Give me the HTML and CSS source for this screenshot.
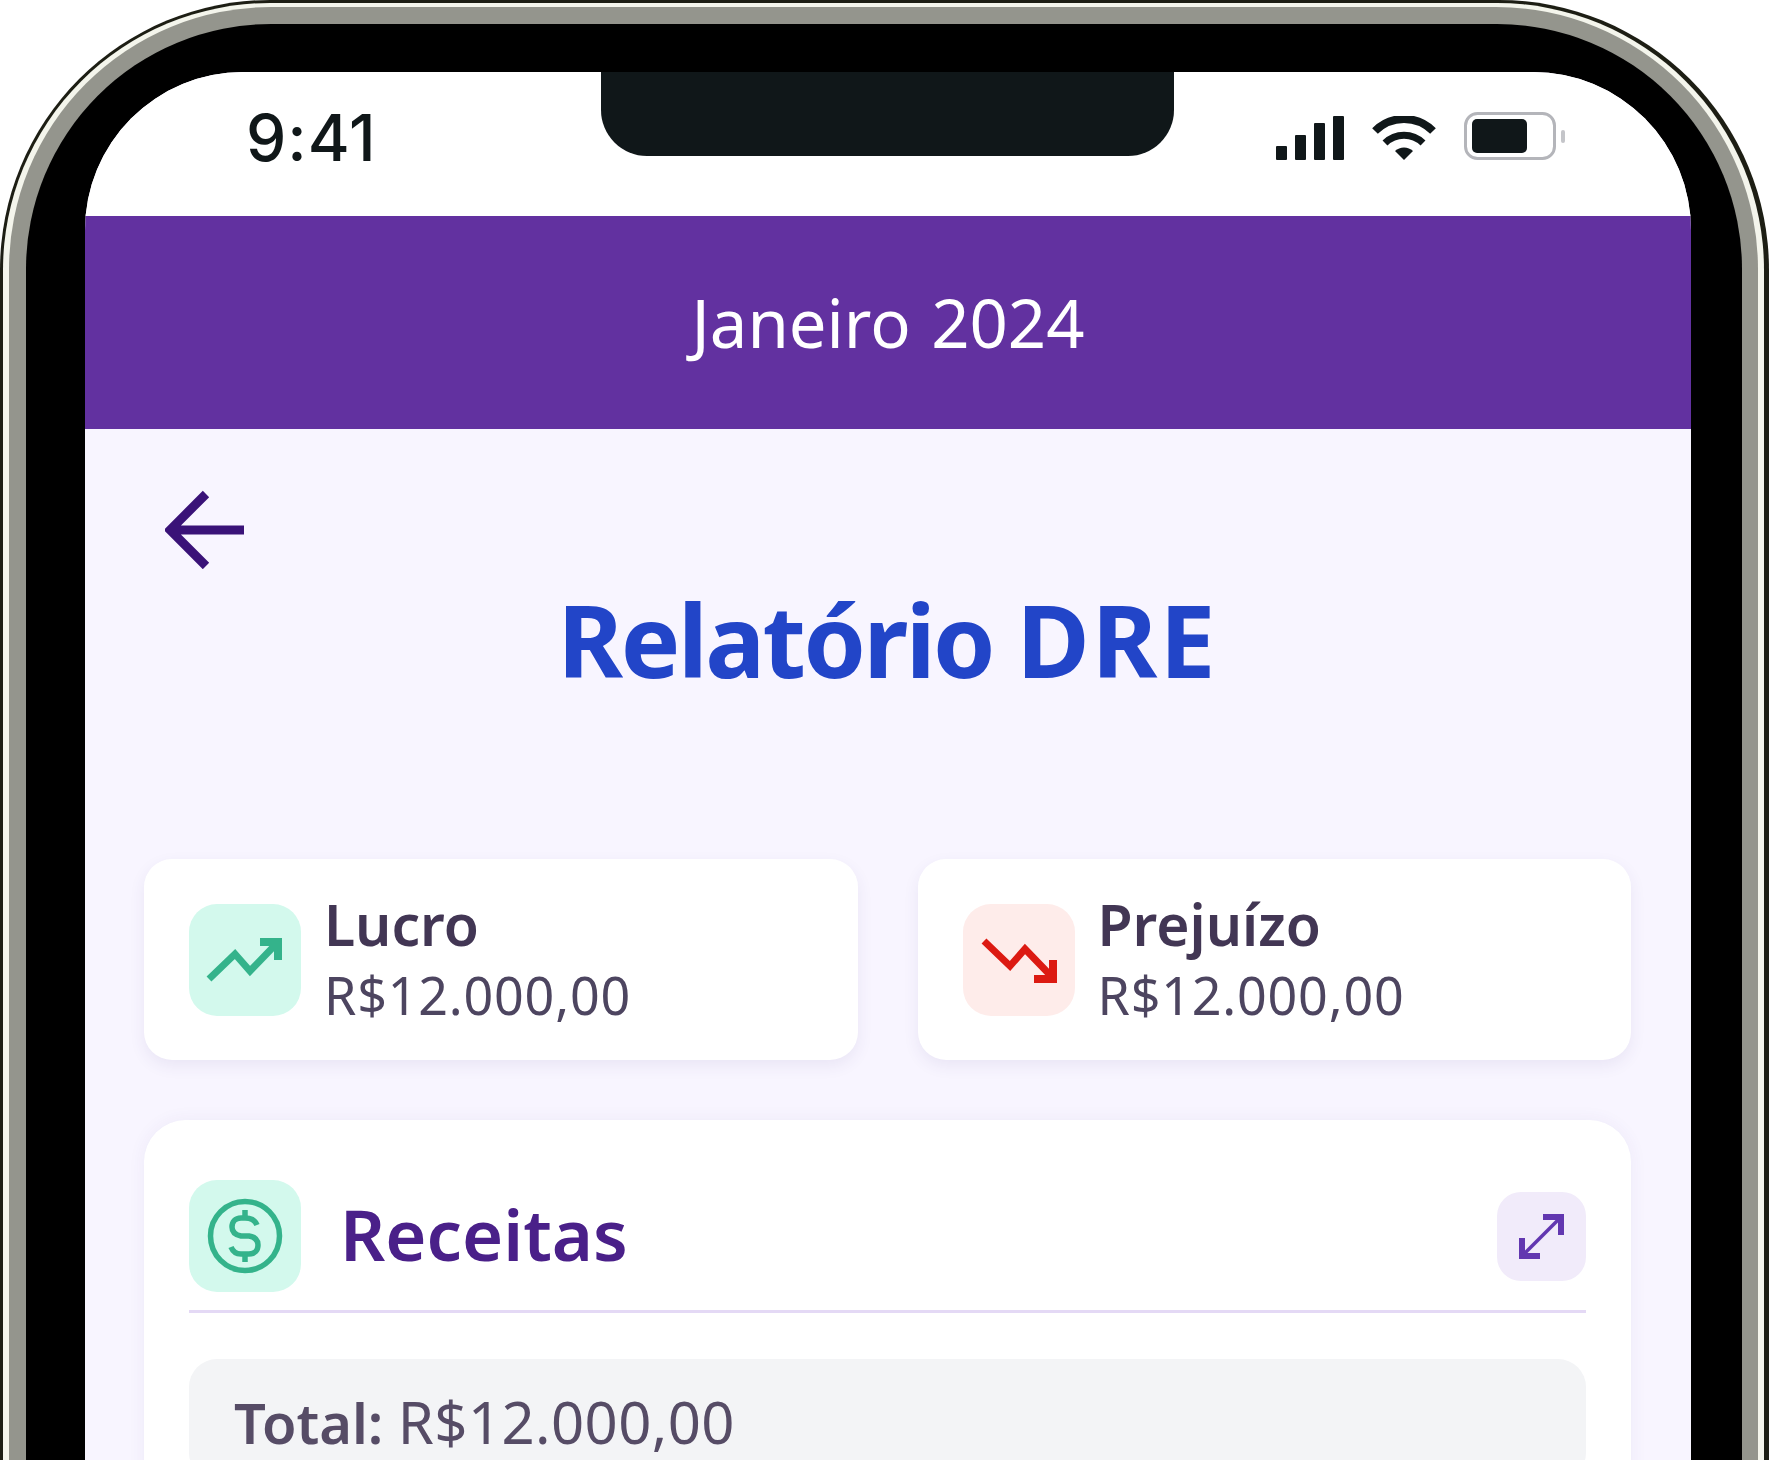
FILE: index.html
```html
<!DOCTYPE html>
<html lang="pt-BR">
    <head>
        <meta charset="UTF-8" />
        <meta name="viewport" content="width=device-width, initial-scale=1.0"/>
        <title>Relatório DRE</title>
        <link rel="stylesheet" href="styles.css">
    </head>
    <body>
        <div class="phone">
            <div class="rim">
                <div class="metal">
                    <div class="bezel">
                        <div class="screen">
                            <div class="notch"></div>

                            <div class="status">
                                <span class="time">9:41</span>
                                <div class="status-icons">
                                    <svg class="signal" width="68" height="44" viewBox="0 0 68 44">
                                        <rect x="0" y="30" width="11" height="14" rx="1"/>
                                        <rect x="19" y="19" width="11" height="25" rx="1"/>
                                        <rect x="38" y="7" width="11" height="37" rx="1"/>
                                        <rect x="57" y="0" width="11" height="44" rx="1"/>
                                    </svg>
                                    <svg class="wifi" width="64" height="44" viewBox="0 0 64 44">
                                        <path d="M3 15A41 41 0 0 1 61 15" fill="none" stroke="#101719" stroke-width="8"/>
                                        <path d="M13 27A27 27 0 0 1 51 27" fill="none" stroke="#101719" stroke-width="7"/>
                                        <path d="M32 44L23 35A13 13 0 0 1 41 35Z" fill="#101719"/>
                                    </svg>
                                    <svg class="battery" width="103" height="48" viewBox="0 0 103 48">
                                        <rect x="1.5" y="1.5" width="89" height="45" rx="12" fill="none" stroke="#b4b5ba" stroke-width="3"/>
                                        <rect x="8" y="7" width="55" height="34" rx="5" fill="#101719"/>
                                        <rect x="97" y="18" width="4" height="13" rx="2" fill="#c4c5c9"/>
                                    </svg>
                                </div>
                            </div>

                            <div class="topbar"><span>Janeiro 2024</span></div>

                            <div class="content">
                                <svg class="back" width="80" height="80" viewBox="0 0 80 80">
                                    <path d="M41 5L5 41L41 77M5 41H79" fill="none" stroke="#3a1278" stroke-width="9"/>
                                </svg>

                                <h1 class="title">Relatório <span class="title-caps">DRE</span></h1>

                                <div class="summary">
                                    <div class="summary-card">
                                        <div class="icon-box green">
                                            <svg width="112" height="112" viewBox="0 0 112 112">
                                                <path d="M20 75L46 50L61 67L90 37" fill="none" stroke="#34b38b" stroke-width="7"/>
                                                <path d="M71 38H89V56" fill="none" stroke="#34b38b" stroke-width="8"/>
                                            </svg>
                                        </div>
                                        <div class="summary-text">
                                            <span class="summary-label">Lucro</span>
                                            <span class="summary-value">R$12.000,00</span>
                                        </div>
                                    </div>
                                    <div class="summary-card">
                                        <div class="icon-box red">
                                            <svg width="112" height="112" viewBox="0 0 112 112">
                                                <path d="M21 37L47 62L62 45L90 74" fill="none" stroke="#dc1a12" stroke-width="7"/>
                                                <path d="M71 75H90V56" fill="none" stroke="#dc1a12" stroke-width="8"/>
                                            </svg>
                                        </div>
                                        <div class="summary-text">
                                            <span class="summary-label">Prejuízo</span>
                                            <span class="summary-value">R$12.000,00</span>
                                        </div>
                                    </div>
                                </div>

                                <div class="section">
                                    <div class="section-head">
                                        <div class="icon-box green">
                                            <svg width="112" height="112" viewBox="0 0 112 112" fill="none" stroke="#34b38b" stroke-width="5.5">
                                                <circle cx="56" cy="56" r="34.5"/>
                                                <path d="M68 45C66 40 61 38 56 38H52C46 38 43 42 43 47C43 52 47 55 52 56H60C66 57 69 60 69 65C69 70 66 74 60 74H52C47 74 44 72 42 67"/>
                                                <path d="M56 30V38M56 74V82"/>
                                            </svg>
                                        </div>
                                        <h2 class="section-title">Receitas</h2>
                                        <button class="expand">
                                            <svg width="89" height="89" viewBox="0 0 89 89" fill="none" stroke="#6237b0">
                                                <path d="M24 65L65 24" stroke-width="3.5"/>
                                                <path d="M46 25H64V43M43 64H25V46" stroke-width="6"/>
                                            </svg>
                                        </button>
                                    </div>
                                    <div class="total"><b>Total:</b> <span class="total-value">R$12.000,00</span></div>
                                </div>
                            </div>
                        </div>
                    </div>
                </div>
            </div>
        </div>
    </body>
</html>
```

FILE: styles.css
```css
* {
    margin: 0;
    padding: 0;
    box-sizing: border-box;
}

body {
    height: 100vh;
    overflow: hidden;
    background-color: #fff;
    font-family: 'Noto Sans', sans-serif;
}

.phone {
    height: 1700px;
    padding: 3px 5px 0 3px;
    background-color: #1d1e14;
    border-radius: 270px 270px 0 0;
}

.rim {
    height: 100%;
    padding: 4px 6px 0 6px;
    background-color: #f4f5ec;
    border-radius: 267px 267px 0 0;
}

.metal {
    height: 100%;
    padding: 17px 16px 0 17px;
    background-color: #94958d;
    border-radius: 262px 262px 0 0;
}

.bezel {
    height: 100%;
    padding: 48px 51px 0 59px;
    background-color: #000;
    border-radius: 245px 245px 0 0;
}

.screen {
    position: relative;
    height: 100%;
    overflow: hidden;
    background-color: #f8f5ff;
    border-radius: 158px 158px 0 0;
}

.notch {
    position: absolute;
    top: 0;
    left: 516px;
    width: 573px;
    height: 84px;
    background-color: #101719;
    border-radius: 0 0 46px 46px;
}

.status {
    height: 144px;
    padding: 40px 126px 0 161px;
    display: flex;
    justify-content: space-between;
    align-items: flex-start;
    background-color: #fff;
}

.time {
    margin-top: -4px;
    font-family: 'Inter', sans-serif;
    font-size: 64px;
    font-weight: 500;
    line-height: 60px;
    letter-spacing: 1px;
    color: #101719;
    filter: blur(0.7px);
}

.status-icons {
    display: flex;
    align-items: flex-end;
    gap: 28px;
    filter: blur(0.5px);
}

.signal {
    fill: #101719;
}

.battery {
    margin-right: -2px;
}

.topbar {
    height: 213px;
    display: flex;
    align-items: center;
    justify-content: center;
    background-color: #6231a0;
    color: #fff;
    font-size: 67px;
    word-spacing: 3px;
}

.topbar span {
    margin-top: -2px;
    filter: blur(0.7px);
}

.content {
    padding: 60px 60px 0 59px;
    filter: blur(0.7px);
}

.back {
    display: block;
    margin-left: 21px;
}

.title {
    margin: 10px 0 160px 0;
    text-align: center;
    font-size: 100px;
    font-weight: 700;
    line-height: 120px;
    letter-spacing: -2.5px;
    color: #2245c8;
}

.title-caps {
    letter-spacing: 2px;
}

.summary {
    display: grid;
    grid-template-columns: repeat(2, 1fr);
    gap: 60px;
    margin-bottom: 60px;
}

.summary-card {
    height: 201px;
    padding: 0 45px;
    display: flex;
    align-items: center;
    gap: 23px;
    background-color: #fff;
    border-radius: 28px;
    box-shadow: 0 6px 16px rgba(70, 50, 130, 0.08);
}

.icon-box {
    width: 112px;
    height: 112px;
    flex-shrink: 0;
    display: flex;
    align-items: center;
    justify-content: center;
    border-radius: 28px;
}

.green {
    background-color: #d3f9ed;
}

.red {
    background-color: #feecea;
}

.summary-text {
    display: flex;
    flex-direction: column;
}

.summary-label {
    font-size: 57px;
    font-weight: 600;
    line-height: 70px;
    color: #423654;
}

.summary-value {
    font-size: 52px;
    line-height: 72px;
    letter-spacing: 0.8px;
    color: #4d4560;
}

.section {
    height: 500px;
    padding: 60px 45px;
    background-color: #fff;
    border-radius: 42px;
    box-shadow: 0 0 18px rgba(70, 50, 130, 0.06);
}

.section-head {
    display: flex;
    align-items: center;
    gap: 39px;
    padding-bottom: 18px;
    border-bottom: 3px solid #e4d9f5;
}

.section-title {
    flex: 1;
    margin-bottom: 4px;
    font-size: 70.5px;
    font-weight: 600;
    color: #4a2089;
}

.expand {
    width: 89px;
    height: 89px;
    display: flex;
    border: none;
    border-radius: 24px;
    background-color: #f1ebfa;
}

.total {
    margin-top: 46px;
    padding: 23px 45px 20px 45px;
    border-radius: 28px;
    background-color: #f3f4f6;
    font-size: 56px;
    color: #564c66;
}

.total b {
    font-weight: 600;
}

.total-value {
    font-size: 58px;
    letter-spacing: 0.4px;
}
```
